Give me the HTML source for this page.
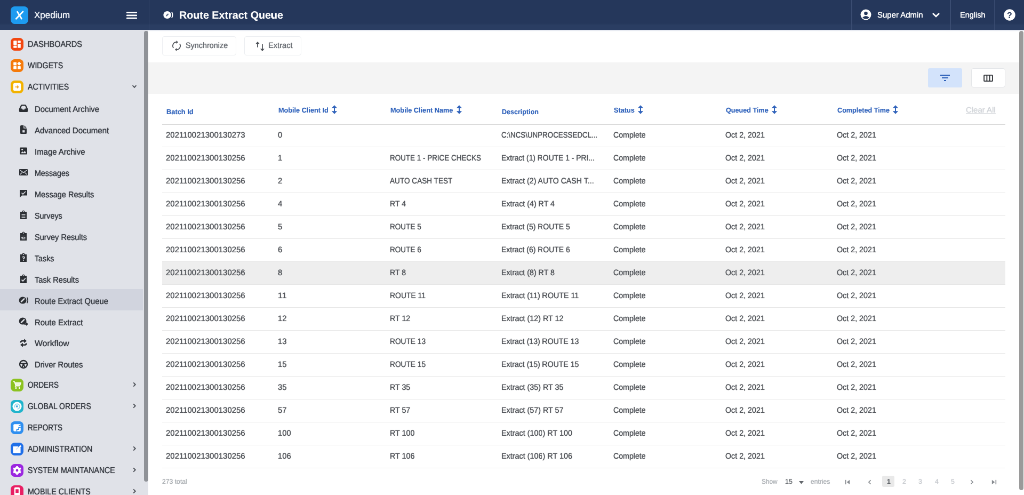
<!DOCTYPE html>
<html><head><meta charset="utf-8"><title>Route Extract Queue</title>
<style>
*{box-sizing:border-box;margin:0;padding:0}
html,body{width:1024px;height:495px;overflow:hidden;background:#fff;font-family:"Liberation Sans",sans-serif}
#app{position:absolute;left:0;top:0;width:1920px;height:929px;transform:scale(0.533333);transform-origin:0 0;overflow:hidden;background:#fff;color:#3c4043;font-size:15px}
.abs{position:absolute}
.t{position:absolute;white-space:nowrap;line-height:1;transform-origin:0 0;display:block}
#app{will-change:transform;backface-visibility:hidden;text-rendering:geometricPrecision}
.t{-webkit-text-stroke:0.12px currentColor;text-shadow:0 0 0.9px currentColor}
/* header */
#hdr{position:absolute;left:0;top:0;width:1920px;height:56px;background:linear-gradient(#25375b 0,#25375b 44px,#2a3d62 47px,#2a3d62 100%)}
#hdr .sep{position:absolute;top:0;width:1.6px;height:56px;background:#3a4c71}
#logo{position:absolute;left:20px;top:12px;width:33px;height:33px;border-radius:7.5px;background:#1d9bf0}
#hsh{position:absolute;left:278px;top:56px;width:1642px;height:3px;background:linear-gradient(#d9deea,#fff)}
/* sidebar */
#side{position:absolute;left:0;top:56px;width:278px;height:873px;background:#e0e2e8}
#side .sb{position:absolute;left:270px;top:2px;width:8px;height:845px;background:#8f9297;border-radius:4px}
.actbg{position:absolute;left:0;width:268px;height:40px;background:#d1d4de}
#side .ic{position:absolute;left:19.7px;width:24px;height:24px;border-radius:7.5px;overflow:hidden}
#side .si{position:absolute;left:35px;width:18px;height:18px}
#side .ch{position:absolute;left:246px;width:12px;height:12px}
/* main */
#main{position:absolute;left:278px;top:56px;width:1642px;height:873px;background:#fff}
.btn{position:absolute;top:68px;height:36px;border:1px solid #eceef1;border-radius:4px;background:#fff}
#band{position:absolute;left:278px;top:116.5px;width:1632px;height:59.5px;background:#f4f4f4}
#fbtn{position:absolute;left:1740px;top:128px;width:64px;height:36px;background:#d3e3fb;border-radius:3px}
#cbtn{position:absolute;left:1821px;top:128px;width:64px;height:36px;background:#fff;border:1px solid #e3e5e8;border-radius:4px}
#thline{position:absolute;left:303.5px;top:232.5px;width:1581.5px;height:1px;background:#d9d9d9}
.row{position:absolute;left:303.5px;width:1581.5px;height:43px;border-bottom:1px solid #e6e6e6}
.row.hl{background:#eeeeee}
#vsb{position:absolute;left:1910.5px;top:58px;width:8.5px;height:861px;background:#9a9a9a;border-radius:4px}
</style></head><body>
<div id="app">
<div id="main"></div><div id="hsh"></div>
<div id="side"><div class="sb"></div>
<div class="ic" style="top:15.00px;background:#f2460f"><svg width="24" height="24" viewBox="0 0 23 23" style="display:block"><rect x="5" y="5" width="6" height="7.5" rx=".8" fill="#fff"/><rect x="5" y="14" width="6" height="4" rx=".8" fill="#fff"/><rect x="12.5" y="5" width="5.5" height="4" rx=".8" fill="#fff"/><rect x="12.5" y="10.5" width="5.5" height="7.5" rx=".8" fill="#fff"/></svg></div>
<span class="t" style="left:51.80px;top:20.36px;font-size:16px;color:#393d44;transform:scaleX(0.9105);">DASHBOARDS</span>
<div class="ic" style="top:54.94px;background:#f57a0a"><svg width="24" height="24" viewBox="0 0 23 23" style="display:block"><rect x="5" y="5.5" width="5.5" height="5.5" rx=".8" fill="#fff"/><rect x="5" y="12.5" width="5.5" height="5.5" rx=".8" fill="#fff"/><rect x="12.5" y="12.5" width="5.5" height="5.5" rx=".8" fill="#fff"/><path d="M15.2 4.2 L18.8 7.8 L15.2 11.4 L11.6 7.8Z" fill="#fff"/></svg></div>
<span class="t" style="left:51.80px;top:60.30px;font-size:16px;color:#393d44;transform:scaleX(0.8870);">WIDGETS</span>
<div class="ic" style="top:94.88px;background:#f2b200"><svg width="24" height="24" viewBox="0 0 23 23" style="display:block"><rect x="4.5" y="4.5" width="14" height="14" rx="3" fill="#fff"/><path d="M8 11.5 H13 M11.5 9.3 L13.8 11.5 L11.5 13.7" stroke="#f5a623" stroke-width="1.6" fill="none"/></svg></div>
<span class="t" style="left:51.80px;top:100.24px;font-size:16px;color:#393d44;transform:scaleX(0.8870);">ACTIVITIES</span>
<svg class="ch" style="top:100.28px" viewBox="0 0 12 12"><path d="M2.6 4.2 L6 7.8 L9.4 4.2" fill="none" stroke="#4c5057" stroke-width="1.9"/></svg>
<div class="si" style="top:138.22px"><svg width="18" height="18" viewBox="0 0 18 18" style="display:block"><path d="M0.8 10 L4 3.4 Q4.6 2.2 6 2.2 H12 Q13.4 2.2 14 3.4 L17.2 10 V14.6 Q17.2 16 15.8 16 H2.2 Q0.8 16 0.8 14.6 Z" fill="#2b2e33"/><path d="M3.6 9.4 L6 4.6 H12 L14.4 9.4 H11.6 L10.6 11.4 H7.4 L6.4 9.4 Z" fill="#e0e2e8"/></svg></div>
<span class="t" style="left:65.20px;top:142.13px;font-size:15.7px;color:#393d44;transform:scaleX(0.9507);">Document Archive</span>
<div class="si" style="top:178.16px"><svg width="18" height="18" viewBox="0 0 18 18" style="display:block"><path d="M4.5 1 H9.2 V6.8 H15 V15.5 Q15 17 13.5 17 H4.5 Q3 17 3 15.5 V2.5 Q3 1 4.5 1Z" fill="#2b2e33"/><path d="M10.6 1.2 L14.8 5.4 H10.6Z" fill="#2b2e33"/><rect x="7.2" y="10.2" width="4.2" height="4.2" fill="#e0e2e8"/></svg></div>
<span class="t" style="left:65.20px;top:182.07px;font-size:15.7px;color:#393d44;transform:scaleX(0.9559);">Advanced Document</span>
<div class="si" style="top:218.10px"><svg width="18" height="18" viewBox="0 0 18 18" style="display:block"><rect x="2" y="2.5" width="14" height="13" rx="1.5" fill="#2b2e33"/><path d="M4 13.3 L7 9.8 L9 12 L11.5 8.8 L14.2 13.3Z" fill="#e0e2e8"/><circle cx="6.6" cy="6.2" r="1.5" fill="#e0e2e8"/></svg></div>
<span class="t" style="left:65.20px;top:222.01px;font-size:15.7px;color:#393d44;transform:scaleX(0.9518);">Image Archive</span>
<div class="si" style="top:258.04px"><svg width="18" height="18" viewBox="0 0 18 18" style="display:block"><rect x="1" y="3" width="16" height="12" rx="1.2" fill="#2b2e33"/><path d="M2.5 5 L9 9.5 L15.5 5 M2.5 13.2 L6.8 9.3 M15.5 13.2 L11.2 9.3" stroke="#e0e2e8" stroke-width="1.3" fill="none"/></svg></div>
<span class="t" style="left:65.20px;top:261.95px;font-size:15.7px;color:#393d44;transform:scaleX(0.9080);">Messages</span>
<div class="si" style="top:297.98px"><svg width="18" height="18" viewBox="0 0 18 18" style="display:block"><path d="M2 2 H16 V12.5 H6 L2 16.5Z" fill="#2b2e33"/><path d="M5.5 7.5 L8 10 L13 5" stroke="#e0e2e8" stroke-width="1.6" fill="none"/></svg></div>
<span class="t" style="left:65.20px;top:301.89px;font-size:15.7px;color:#393d44;transform:scaleX(0.9249);">Message Results</span>
<div class="si" style="top:337.92px"><svg width="18" height="18" viewBox="0 0 18 18" style="display:block"><path d="M3 3 H6.5 A2.5 2.5 0 0 1 11.5 3 H15 V17 H3Z" fill="#2b2e33"/><circle cx="9" cy="3" r="1" fill="#e0e2e8"/><path d="M5.5 8.5 H12.5 M5.5 11 H12.5 M5.5 13.5 H12.5" stroke="#e0e2e8" stroke-width="1.2"/></svg></div>
<span class="t" style="left:65.20px;top:341.83px;font-size:15.7px;color:#393d44;transform:scaleX(0.9125);">Surveys</span>
<div class="si" style="top:377.86px"><svg width="18" height="18" viewBox="0 0 18 18" style="display:block"><path d="M3 3 H6.5 A2.5 2.5 0 0 1 11.5 3 H15 V17 H3Z" fill="#2b2e33"/><circle cx="9" cy="3" r="1" fill="#e0e2e8"/><path d="M5.5 8.5 H12.5 M9.5 11.2 H12.5 M5.5 13.8 H12.5 M5.3 11 L6.6 12.3 L8.6 10" stroke="#e0e2e8" stroke-width="1.2" fill="none"/></svg></div>
<span class="t" style="left:65.20px;top:381.77px;font-size:15.7px;color:#393d44;transform:scaleX(0.9288);">Survey Results</span>
<div class="si" style="top:417.80px"><svg width="18" height="18" viewBox="0 0 18 18" style="display:block"><path d="M3 3 H6.5 A2.5 2.5 0 0 1 11.5 3 H15 V17 H3Z" fill="#2b2e33"/><circle cx="9" cy="3" r="1" fill="#e0e2e8"/><path d="M7 8.3 Q9 6.5 11 8.3 Q11.3 9.8 9 11 V12.2 M9 13.5 V15" stroke="#e0e2e8" stroke-width="1.6" fill="none"/></svg></div>
<span class="t" style="left:65.20px;top:421.71px;font-size:15.7px;color:#393d44;transform:scaleX(0.9064);">Tasks</span>
<div class="si" style="top:457.74px"><svg width="18" height="18" viewBox="0 0 18 18" style="display:block"><path d="M3 3 H6.5 A2.5 2.5 0 0 1 11.5 3 H15 V17 H3Z" fill="#2b2e33"/><circle cx="9" cy="3" r="1" fill="#e0e2e8"/><path d="M5.5 10.5 L8 13 L12.8 7.5" stroke="#e0e2e8" stroke-width="1.8" fill="none"/></svg></div>
<span class="t" style="left:65.20px;top:461.65px;font-size:15.7px;color:#393d44;transform:scaleX(0.9333);">Task Results</span>
<div class="actbg" style="top:486.48px"></div>
<div class="si" style="top:497.68px"><svg width="18" height="18" viewBox="0 0 18 18" style="display:block"><ellipse cx="7.6" cy="9" rx="7" ry="6.6" fill="#2b2e33"/><path d="M5 11.6 L10.2 6.4" stroke="#e0e2e8" stroke-width="2.6" stroke-linecap="round"/><path d="M15.6 3.6 Q18.8 9 15.6 14.4" stroke="#2b2e33" stroke-width="1.7" fill="none"/></svg></div>
<span class="t" style="left:65.20px;top:501.59px;font-size:15.7px;color:#393d44;transform:scaleX(0.9413);">Route Extract Queue</span>
<div class="si" style="top:537.62px"><svg width="18" height="18" viewBox="0 0 18 18" style="display:block"><ellipse cx="7.6" cy="8" rx="7" ry="6.6" fill="#2b2e33"/><path d="M5 10.6 L10.2 5.4" stroke="#e0e2e8" stroke-width="2.6" stroke-linecap="round"/><path d="M10.5 13.6 H15" stroke="#2b2e33" stroke-width="2.4" fill="none"/><path d="M14 10.2 L18 13.6 L14 17Z" fill="#2b2e33"/></svg></div>
<span class="t" style="left:65.20px;top:541.53px;font-size:15.7px;color:#393d44;transform:scaleX(0.9502);">Route Extract</span>
<div class="si" style="top:577.56px"><svg width="18" height="18" viewBox="0 0 18 18" style="display:block"><path d="M10.5 5.2 H6.5 Q3.8 5.2 3.8 8.6" stroke="#2b2e33" stroke-width="2.5" fill="none"/><path d="M10 1.2 L15 5.2 L10 9.2Z" fill="#2b2e33"/><path d="M7.5 12.8 H11.5 Q14.2 12.8 14.2 9.4" stroke="#2b2e33" stroke-width="2.5" fill="none"/><path d="M8 8.8 L3 12.8 L8 16.8Z" fill="#2b2e33"/></svg></div>
<span class="t" style="left:65.20px;top:581.47px;font-size:15.7px;color:#393d44;transform:scaleX(1.0066);">Workflow</span>
<div class="si" style="top:617.50px"><svg width="18" height="18" viewBox="0 0 18 18" style="display:block"><circle cx="9" cy="9" r="7" fill="none" stroke="#2b2e33" stroke-width="2.3"/><path d="M2.5 7.6 H15.5 M9 9 L6 15 M9 9 L12 15" stroke="#2b2e33" stroke-width="2.3" fill="none"/><circle cx="9" cy="9" r="2" fill="#2b2e33"/></svg></div>
<span class="t" style="left:65.20px;top:621.41px;font-size:15.7px;color:#393d44;transform:scaleX(0.9417);">Driver Routes</span>
<div class="ic" style="top:654.04px;background:#8cc220"><svg width="24" height="24" viewBox="0 0 23 23" style="display:block"><path d="M4.5 5.3 H6.8 L7.6 7.3 H18.5 L16.5 12.6 H9 L6.8 5.8" fill="#eef7d8" stroke="#fff" stroke-width="1.3" stroke-linejoin="round"/><circle cx="9.5" cy="16.8" r="1.5" fill="#fff"/><circle cx="15.6" cy="16.8" r="1.5" fill="#fff"/><path d="M8.8 12.8 L8 14.8 H16.8" stroke="#fff" stroke-width="1.2" fill="none"/></svg></div>
<span class="t" style="left:51.80px;top:659.40px;font-size:16px;color:#393d44;transform:scaleX(0.8464);">ORDERS</span>
<svg class="ch" style="top:659.44px" viewBox="0 0 12 12"><path d="M4.2 2.4 L7.8 6 L4.2 9.6" fill="none" stroke="#4c5057" stroke-width="1.9"/></svg>
<div class="ic" style="top:693.98px;background:#21b4cc"><svg width="24" height="24" viewBox="0 0 23 23" style="display:block"><circle cx="11.5" cy="11.5" r="8.2" fill="#fff"/><path d="M7.5 13.5 A4.6 4.6 0 1 1 12 16.3" stroke="#8fdbe8" stroke-width="1.5" fill="none"/><circle cx="11.3" cy="11.6" r="1.9" fill="#4aa8e0"/></svg></div>
<span class="t" style="left:51.80px;top:699.34px;font-size:16px;color:#393d44;transform:scaleX(0.8705);">GLOBAL ORDERS</span>
<svg class="ch" style="top:699.38px" viewBox="0 0 12 12"><path d="M4.2 2.4 L7.8 6 L4.2 9.6" fill="none" stroke="#4c5057" stroke-width="1.9"/></svg>
<div class="ic" style="top:733.92px;background:#2f8ff0"><svg width="24" height="24" viewBox="0 0 23 23" style="display:block"><rect x="5" y="5" width="13" height="13" rx="2" fill="#fff"/><path d="M14.5 7.5 H18 M11 18 V14.5 H14.5 V11 H18" stroke="#2f8ff0" stroke-width="1.6" fill="none"/></svg></div>
<span class="t" style="left:51.80px;top:739.28px;font-size:16px;color:#393d44;transform:scaleX(0.8419);">REPORTS</span>
<div class="ic" style="top:773.86px;background:#1f6fe8"><svg width="24" height="24" viewBox="0 0 23 23" style="display:block"><path d="M5 7.5 H13 L9.5 11 V14 H12.5 L17 9.5 V18 H5Z" fill="#fff" stroke="#fff" stroke-width="1.6" stroke-linejoin="round"/><path d="M17.5 4.5 L19.5 6.5 L12.5 13.5 L10.3 13.8 L10.6 11.5Z" fill="#fff"/></svg></div>
<span class="t" style="left:51.80px;top:779.22px;font-size:16px;color:#393d44;transform:scaleX(0.8948);">ADMINISTRATION</span>
<svg class="ch" style="top:779.26px" viewBox="0 0 12 12"><path d="M4.2 2.4 L7.8 6 L4.2 9.6" fill="none" stroke="#4c5057" stroke-width="1.9"/></svg>
<div class="ic" style="top:813.80px;background:#9b27e0"><svg width="24" height="24" viewBox="0 0 23 23" style="display:block"><circle cx="11.5" cy="11.5" r="4.6" fill="none" stroke="#fff" stroke-width="3.4"/><g stroke="#fff" stroke-width="3.2"><path d="M11.5 3.8 V19.2"/><path d="M4.8 7.65 L18.2 15.35"/><path d="M4.8 15.35 L18.2 7.65"/></g><circle cx="11.5" cy="11.5" r="2.3" fill="#9c27d8"/></svg></div>
<span class="t" style="left:51.80px;top:819.16px;font-size:16px;color:#393d44;transform:scaleX(0.8824);">SYSTEM MAINTANANCE</span>
<svg class="ch" style="top:819.20px" viewBox="0 0 12 12"><path d="M4.2 2.4 L7.8 6 L4.2 9.6" fill="none" stroke="#4c5057" stroke-width="1.9"/></svg>
<div class="ic" style="top:853.74px;background:#e91e63"><svg width="24" height="24" viewBox="0 0 23 23" style="display:block"><rect x="6.5" y="3.5" width="10" height="17" rx="2" fill="#fff"/><rect x="8.8" y="7" width="5.4" height="6.5" fill="#e91e63"/></svg></div>
<span class="t" style="left:51.80px;top:859.10px;font-size:16px;color:#393d44;transform:scaleX(0.8892);">MOBILE CLIENTS</span>
<svg class="ch" style="top:859.14px" viewBox="0 0 12 12"><path d="M4.2 2.4 L7.8 6 L4.2 9.6" fill="none" stroke="#4c5057" stroke-width="1.9"/></svg>
</div>
<div id="hdr">
<div id="logo"><svg width="33" height="33" viewBox="0 0 33 33"><path d="M12.6 10.2 L20.4 23 M23 9.8 L10.2 23.2" stroke="#fff" stroke-width="2.8" fill="none" stroke-linecap="round"/></svg></div>
<span class="t" style="left:63.50px;top:19.79px;font-size:17.5px;color:#f0f3f8;transform:scaleX(0.9719);">Xpedium</span>
<svg class="abs" style="left:237px;top:22px" width="20" height="14" viewBox="0 0 20 14"><rect x="0" y="0" width="20" height="2.8" rx="1" fill="#fff"/><rect x="0" y="5.4" width="20" height="2.8" rx="1" fill="#fff"/><rect x="0" y="10.8" width="20" height="2.8" rx="1" fill="#fff"/></svg>
<div class="sep" style="left:278.5px"></div>
<div class="abs" style="left:306px;top:20px;width:20px;height:16px"><svg width="20" height="16" viewBox="0 0 20 16"><ellipse cx="7.6" cy="8" rx="7.3" ry="7" fill="#fff"/><path d="M6.2 9.4 L9 6.6" stroke="#5a6886" stroke-width="2.2" stroke-linecap="round"/><path d="M16 2.4 Q19.2 8 16 13.6" stroke="#fff" stroke-width="1.9" fill="none"/></svg></div>
<span class="t" style="left:336.00px;top:19.07px;font-size:20px;color:#fff;transform:scaleX(0.9857);font-weight:bold;-webkit-text-stroke:0.15px currentColor;text-shadow:none;">Route Extract Queue</span>
<div class="sep" style="left:1596px"></div>
<div class="abs" style="left:1612.5px;top:17px;width:21px;height:21px"><svg width="21" height="21" viewBox="0 0 21 21"><circle cx="10.5" cy="10.5" r="10" fill="#fff"/><circle cx="10.5" cy="8" r="3.3" fill="#24375b"/><path d="M4 16 Q10.5 10 17 16 Q10.5 21.5 4 16Z" fill="#24375b"/></svg></div>
<span class="t" style="left:1644.50px;top:20.90px;font-size:15px;color:#fff;transform:scaleX(0.9977);text-shadow:0 0 .7px #fff;">Super Admin</span>
<svg class="abs" style="left:1747px;top:22.5px" width="16" height="11" viewBox="0 0 16 11"><path d="M2 2 L8 7.8 L14 2" fill="none" stroke="#fff" stroke-width="2.7"/></svg>
<div class="sep" style="left:1781px"></div>
<span class="t" style="left:1800.00px;top:20.80px;font-size:15px;color:#fff;transform:scaleX(0.9642);text-shadow:0 0 .7px #fff;">English</span>
<div class="sep" style="left:1863.5px"></div>
<div class="abs" style="left:1881.5px;top:17px;width:22px;height:22px"><svg width="22" height="22" viewBox="0 0 22 22"><circle cx="11" cy="11" r="10.7" fill="#fff"/><text x="11" y="16.6" font-family="Liberation Sans" font-weight="bold" font-size="16" text-anchor="middle" fill="#24375b">?</text></svg></div>
</div>
<div class="btn" style="left:304px;width:139px"><svg class="abs" style="left:15px;top:6px" width="22" height="22" viewBox="0 0 20 20"><path d="M10 3.6 A6.4 6.4 0 0 0 4.7 13.6" fill="none" stroke="#4c5056" stroke-width="1.6"/><path d="M10 16.4 A6.4 6.4 0 0 0 15.3 6.4" fill="none" stroke="#4c5056" stroke-width="1.6"/><path d="M9.6 0.8 L12.8 3.6 L9.6 6.4Z" fill="#4c5056"/><path d="M10.4 13.6 L7.2 16.4 L10.4 19.2Z" fill="#4c5056"/></svg></div>
<span class="t" style="left:348.00px;top:78.30px;font-size:15px;color:#6a6e74;transform:scaleX(0.9586);">Synchronize</span>
<div class="btn" style="left:458px;width:107px"><svg class="abs" style="left:19px;top:8px" width="20" height="20" viewBox="0 0 18 18"><path d="M4.5 0.8 L1 5 H3.7 V10.5 H5.3 V5 H8Z" fill="#4c5056"/><path d="M12.5 17.2 L9 13 H11.7 V5.5 H13.3 V13 H16Z" fill="#4c5056"/></svg></div>
<span class="t" style="left:503.00px;top:78.30px;font-size:15px;color:#6a6e74;transform:scaleX(0.9761);">Extract</span>
<div id="band"></div>
<div id="fbtn"><svg class="abs" style="left:23px;top:11px" width="18" height="14" viewBox="0 0 18 14"><rect x="0" y="1" width="18" height="2" fill="#2b5fb8"/><rect x="3" y="6" width="12" height="2" fill="#2b5fb8"/><rect x="7" y="11" width="4" height="2" fill="#2b5fb8"/></svg></div>
<div id="cbtn"><svg class="abs" style="left:21.5px;top:11px" width="18" height="13" viewBox="0 0 19 14"><rect x="1" y="1" width="17" height="12" rx="1" fill="none" stroke="#2e3136" stroke-width="2"/><path d="M6.7 1 V13 M12.3 1 V13" stroke="#2e3136" stroke-width="2"/></svg></div>
<span class="t" style="left:311.50px;top:202.50px;font-size:13px;color:#2f62bb;transform:scaleX(0.9872);font-weight:bold;-webkit-text-stroke:0.15px currentColor;text-shadow:none;">Batch Id</span>
<span class="t" style="left:521.50px;top:199.50px;font-size:13px;color:#2f62bb;transform:scaleX(0.9760);font-weight:bold;-webkit-text-stroke:0.15px currentColor;text-shadow:none;">Mobile Client Id</span>
<svg class="abs" style="left:621.0px;top:197px" width="12" height="17" viewBox="0 0 12 17"><path d="M6 0.3 L0.8 5.8 H5 V11.2 H0.8 L6 16.7 L11.2 11.2 H7 V5.8 H11.2 Z" fill="#2f62bb"/></svg>
<span class="t" style="left:731.50px;top:199.50px;font-size:13px;color:#2f62bb;transform:scaleX(0.9789);font-weight:bold;-webkit-text-stroke:0.15px currentColor;text-shadow:none;">Mobile Client Name</span>
<svg class="abs" style="left:854.6px;top:197px" width="12" height="17" viewBox="0 0 12 17"><path d="M6 0.3 L0.8 5.8 H5 V11.2 H0.8 L6 16.7 L11.2 11.2 H7 V5.8 H11.2 Z" fill="#2f62bb"/></svg>
<span class="t" style="left:940.50px;top:202.50px;font-size:13px;color:#2f62bb;transform:scaleX(0.9649);font-weight:bold;-webkit-text-stroke:0.15px currentColor;text-shadow:none;">Description</span>
<span class="t" style="left:1150.50px;top:199.50px;font-size:13px;color:#2f62bb;transform:scaleX(0.9769);font-weight:bold;-webkit-text-stroke:0.15px currentColor;text-shadow:none;">Status</span>
<svg class="abs" style="left:1195.0px;top:197px" width="12" height="17" viewBox="0 0 12 17"><path d="M6 0.3 L0.8 5.8 H5 V11.2 H0.8 L6 16.7 L11.2 11.2 H7 V5.8 H11.2 Z" fill="#2f62bb"/></svg>
<span class="t" style="left:1360.50px;top:199.50px;font-size:13px;color:#2f62bb;transform:scaleX(0.9705);font-weight:bold;-webkit-text-stroke:0.15px currentColor;text-shadow:none;">Queued Time</span>
<svg class="abs" style="left:1445.9px;top:197px" width="12" height="17" viewBox="0 0 12 17"><path d="M6 0.3 L0.8 5.8 H5 V11.2 H0.8 L6 16.7 L11.2 11.2 H7 V5.8 H11.2 Z" fill="#2f62bb"/></svg>
<span class="t" style="left:1569.50px;top:199.50px;font-size:13px;color:#2f62bb;transform:scaleX(0.9720);font-weight:bold;-webkit-text-stroke:0.15px currentColor;text-shadow:none;">Completed Time</span>
<svg class="abs" style="left:1673.3px;top:197px" width="12" height="17" viewBox="0 0 12 17"><path d="M6 0.3 L0.8 5.8 H5 V11.2 H0.8 L6 16.7 L11.2 11.2 H7 V5.8 H11.2 Z" fill="#2f62bb"/></svg>
<span class="t" style="left:1811.00px;top:200.23px;font-size:14.5px;color:#d3d6da;transform:scaleX(1.0314);text-decoration:underline;">Clear All</span>
<div id="thline"></div>
<div class="row" style="top:233px"></div>
<span class="t" style="left:311.00px;top:246.27px;font-size:15px;color:#53565b;transform:scaleX(0.9976);">202110021300130273</span>
<span class="t" style="left:521.00px;top:246.27px;font-size:15px;color:#53565b;transform:scaleX(0.9890);">0</span>
<span class="t" style="left:940.00px;top:246.27px;font-size:15px;color:#53565b;transform:scaleX(0.8897);">C:\NCS\UNPROCESSEDCL...</span>
<span class="t" style="left:1150.00px;top:246.27px;font-size:15px;color:#53565b;transform:scaleX(0.9434);">Complete</span>
<span class="t" style="left:1360.00px;top:246.27px;font-size:15px;color:#53565b;transform:scaleX(0.9526);">Oct 2, 2021</span>
<span class="t" style="left:1569.00px;top:246.27px;font-size:15px;color:#53565b;transform:scaleX(0.9526);">Oct 2, 2021</span>
<div class="row" style="top:276px"></div>
<span class="t" style="left:311.00px;top:289.27px;font-size:15px;color:#53565b;transform:scaleX(0.9976);">202110021300130256</span>
<span class="t" style="left:521.00px;top:289.27px;font-size:15px;color:#53565b;transform:scaleX(0.9890);">1</span>
<span class="t" style="left:731.00px;top:289.27px;font-size:15px;color:#53565b;transform:scaleX(0.8959);">ROUTE 1 - PRICE CHECKS</span>
<span class="t" style="left:940.00px;top:289.27px;font-size:15px;color:#53565b;transform:scaleX(0.9247);">Extract (1) ROUTE 1 - PRI...</span>
<span class="t" style="left:1150.00px;top:289.27px;font-size:15px;color:#53565b;transform:scaleX(0.9434);">Complete</span>
<span class="t" style="left:1360.00px;top:289.27px;font-size:15px;color:#53565b;transform:scaleX(0.9526);">Oct 2, 2021</span>
<span class="t" style="left:1569.00px;top:289.27px;font-size:15px;color:#53565b;transform:scaleX(0.9526);">Oct 2, 2021</span>
<div class="row" style="top:319px"></div>
<span class="t" style="left:311.00px;top:332.27px;font-size:15px;color:#53565b;transform:scaleX(0.9976);">202110021300130256</span>
<span class="t" style="left:521.00px;top:332.27px;font-size:15px;color:#53565b;transform:scaleX(0.9890);">2</span>
<span class="t" style="left:731.00px;top:332.27px;font-size:15px;color:#53565b;transform:scaleX(0.9066);">AUTO CASH TEST</span>
<span class="t" style="left:940.00px;top:332.27px;font-size:15px;color:#53565b;transform:scaleX(0.9454);">Extract (2) AUTO CASH T...</span>
<span class="t" style="left:1150.00px;top:332.27px;font-size:15px;color:#53565b;transform:scaleX(0.9434);">Complete</span>
<span class="t" style="left:1360.00px;top:332.27px;font-size:15px;color:#53565b;transform:scaleX(0.9526);">Oct 2, 2021</span>
<span class="t" style="left:1569.00px;top:332.27px;font-size:15px;color:#53565b;transform:scaleX(0.9526);">Oct 2, 2021</span>
<div class="row" style="top:362px"></div>
<span class="t" style="left:311.00px;top:375.27px;font-size:15px;color:#53565b;transform:scaleX(0.9976);">202110021300130256</span>
<span class="t" style="left:521.00px;top:375.27px;font-size:15px;color:#53565b;transform:scaleX(0.9890);">4</span>
<span class="t" style="left:731.00px;top:375.27px;font-size:15px;color:#53565b;transform:scaleX(0.9371);">RT 4</span>
<span class="t" style="left:940.00px;top:375.27px;font-size:15px;color:#53565b;transform:scaleX(0.9491);">Extract (4) RT 4</span>
<span class="t" style="left:1150.00px;top:375.27px;font-size:15px;color:#53565b;transform:scaleX(0.9434);">Complete</span>
<span class="t" style="left:1360.00px;top:375.27px;font-size:15px;color:#53565b;transform:scaleX(0.9526);">Oct 2, 2021</span>
<span class="t" style="left:1569.00px;top:375.27px;font-size:15px;color:#53565b;transform:scaleX(0.9526);">Oct 2, 2021</span>
<div class="row" style="top:405px"></div>
<span class="t" style="left:311.00px;top:418.27px;font-size:15px;color:#53565b;transform:scaleX(0.9976);">202110021300130256</span>
<span class="t" style="left:521.00px;top:418.27px;font-size:15px;color:#53565b;transform:scaleX(0.9890);">5</span>
<span class="t" style="left:731.00px;top:418.27px;font-size:15px;color:#53565b;transform:scaleX(0.9043);">ROUTE 5</span>
<span class="t" style="left:940.00px;top:418.27px;font-size:15px;color:#53565b;transform:scaleX(0.9308);">Extract (5) ROUTE 5</span>
<span class="t" style="left:1150.00px;top:418.27px;font-size:15px;color:#53565b;transform:scaleX(0.9434);">Complete</span>
<span class="t" style="left:1360.00px;top:418.27px;font-size:15px;color:#53565b;transform:scaleX(0.9526);">Oct 2, 2021</span>
<span class="t" style="left:1569.00px;top:418.27px;font-size:15px;color:#53565b;transform:scaleX(0.9526);">Oct 2, 2021</span>
<div class="row" style="top:448px"></div>
<span class="t" style="left:311.00px;top:461.27px;font-size:15px;color:#53565b;transform:scaleX(0.9976);">202110021300130256</span>
<span class="t" style="left:521.00px;top:461.27px;font-size:15px;color:#53565b;transform:scaleX(0.9890);">6</span>
<span class="t" style="left:731.00px;top:461.27px;font-size:15px;color:#53565b;transform:scaleX(0.9043);">ROUTE 6</span>
<span class="t" style="left:940.00px;top:461.27px;font-size:15px;color:#53565b;transform:scaleX(0.9308);">Extract (6) ROUTE 6</span>
<span class="t" style="left:1150.00px;top:461.27px;font-size:15px;color:#53565b;transform:scaleX(0.9434);">Complete</span>
<span class="t" style="left:1360.00px;top:461.27px;font-size:15px;color:#53565b;transform:scaleX(0.9526);">Oct 2, 2021</span>
<span class="t" style="left:1569.00px;top:461.27px;font-size:15px;color:#53565b;transform:scaleX(0.9526);">Oct 2, 2021</span>
<div class="row hl" style="top:491px"></div>
<span class="t" style="left:311.00px;top:504.27px;font-size:15px;color:#53565b;transform:scaleX(0.9976);">202110021300130256</span>
<span class="t" style="left:521.00px;top:504.27px;font-size:15px;color:#53565b;transform:scaleX(0.9890);">8</span>
<span class="t" style="left:731.00px;top:504.27px;font-size:15px;color:#53565b;transform:scaleX(0.9371);">RT 8</span>
<span class="t" style="left:940.00px;top:504.27px;font-size:15px;color:#53565b;transform:scaleX(0.9491);">Extract (8) RT 8</span>
<span class="t" style="left:1150.00px;top:504.27px;font-size:15px;color:#53565b;transform:scaleX(0.9434);">Complete</span>
<span class="t" style="left:1360.00px;top:504.27px;font-size:15px;color:#53565b;transform:scaleX(0.9526);">Oct 2, 2021</span>
<span class="t" style="left:1569.00px;top:504.27px;font-size:15px;color:#53565b;transform:scaleX(0.9526);">Oct 2, 2021</span>
<div class="row" style="top:534px"></div>
<span class="t" style="left:311.00px;top:547.27px;font-size:15px;color:#53565b;transform:scaleX(0.9976);">202110021300130256</span>
<span class="t" style="left:521.00px;top:547.27px;font-size:15px;color:#53565b;transform:scaleX(1.0597);">11</span>
<span class="t" style="left:731.00px;top:547.27px;font-size:15px;color:#53565b;transform:scaleX(0.9280);">ROUTE 11</span>
<span class="t" style="left:940.00px;top:547.27px;font-size:15px;color:#53565b;transform:scaleX(0.9507);">Extract (11) ROUTE 11</span>
<span class="t" style="left:1150.00px;top:547.27px;font-size:15px;color:#53565b;transform:scaleX(0.9434);">Complete</span>
<span class="t" style="left:1360.00px;top:547.27px;font-size:15px;color:#53565b;transform:scaleX(0.9526);">Oct 2, 2021</span>
<span class="t" style="left:1569.00px;top:547.27px;font-size:15px;color:#53565b;transform:scaleX(0.9526);">Oct 2, 2021</span>
<div class="row" style="top:577px"></div>
<span class="t" style="left:311.00px;top:590.27px;font-size:15px;color:#53565b;transform:scaleX(0.9976);">202110021300130256</span>
<span class="t" style="left:521.00px;top:590.27px;font-size:15px;color:#53565b;transform:scaleX(0.9890);">12</span>
<span class="t" style="left:731.00px;top:590.27px;font-size:15px;color:#53565b;transform:scaleX(0.9479);">RT 12</span>
<span class="t" style="left:940.00px;top:590.27px;font-size:15px;color:#53565b;transform:scaleX(0.9546);">Extract (12) RT 12</span>
<span class="t" style="left:1150.00px;top:590.27px;font-size:15px;color:#53565b;transform:scaleX(0.9434);">Complete</span>
<span class="t" style="left:1360.00px;top:590.27px;font-size:15px;color:#53565b;transform:scaleX(0.9526);">Oct 2, 2021</span>
<span class="t" style="left:1569.00px;top:590.27px;font-size:15px;color:#53565b;transform:scaleX(0.9526);">Oct 2, 2021</span>
<div class="row" style="top:620px"></div>
<span class="t" style="left:311.00px;top:633.27px;font-size:15px;color:#53565b;transform:scaleX(0.9976);">202110021300130256</span>
<span class="t" style="left:521.00px;top:633.27px;font-size:15px;color:#53565b;transform:scaleX(0.9890);">13</span>
<span class="t" style="left:731.00px;top:633.27px;font-size:15px;color:#53565b;transform:scaleX(0.9139);">ROUTE 13</span>
<span class="t" style="left:940.00px;top:633.27px;font-size:15px;color:#53565b;transform:scaleX(0.9371);">Extract (13) ROUTE 13</span>
<span class="t" style="left:1150.00px;top:633.27px;font-size:15px;color:#53565b;transform:scaleX(0.9434);">Complete</span>
<span class="t" style="left:1360.00px;top:633.27px;font-size:15px;color:#53565b;transform:scaleX(0.9526);">Oct 2, 2021</span>
<span class="t" style="left:1569.00px;top:633.27px;font-size:15px;color:#53565b;transform:scaleX(0.9526);">Oct 2, 2021</span>
<div class="row" style="top:663px"></div>
<span class="t" style="left:311.00px;top:676.27px;font-size:15px;color:#53565b;transform:scaleX(0.9976);">202110021300130256</span>
<span class="t" style="left:521.00px;top:676.27px;font-size:15px;color:#53565b;transform:scaleX(0.9890);">15</span>
<span class="t" style="left:731.00px;top:676.27px;font-size:15px;color:#53565b;transform:scaleX(0.9139);">ROUTE 15</span>
<span class="t" style="left:940.00px;top:676.27px;font-size:15px;color:#53565b;transform:scaleX(0.9371);">Extract (15) ROUTE 15</span>
<span class="t" style="left:1150.00px;top:676.27px;font-size:15px;color:#53565b;transform:scaleX(0.9434);">Complete</span>
<span class="t" style="left:1360.00px;top:676.27px;font-size:15px;color:#53565b;transform:scaleX(0.9526);">Oct 2, 2021</span>
<span class="t" style="left:1569.00px;top:676.27px;font-size:15px;color:#53565b;transform:scaleX(0.9526);">Oct 2, 2021</span>
<div class="row" style="top:706px"></div>
<span class="t" style="left:311.00px;top:719.27px;font-size:15px;color:#53565b;transform:scaleX(0.9976);">202110021300130256</span>
<span class="t" style="left:521.00px;top:719.27px;font-size:15px;color:#53565b;transform:scaleX(0.9890);">35</span>
<span class="t" style="left:731.00px;top:719.27px;font-size:15px;color:#53565b;transform:scaleX(0.9479);">RT 35</span>
<span class="t" style="left:940.00px;top:719.27px;font-size:15px;color:#53565b;transform:scaleX(0.9546);">Extract (35) RT 35</span>
<span class="t" style="left:1150.00px;top:719.27px;font-size:15px;color:#53565b;transform:scaleX(0.9434);">Complete</span>
<span class="t" style="left:1360.00px;top:719.27px;font-size:15px;color:#53565b;transform:scaleX(0.9526);">Oct 2, 2021</span>
<span class="t" style="left:1569.00px;top:719.27px;font-size:15px;color:#53565b;transform:scaleX(0.9526);">Oct 2, 2021</span>
<div class="row" style="top:749px"></div>
<span class="t" style="left:311.00px;top:762.27px;font-size:15px;color:#53565b;transform:scaleX(0.9976);">202110021300130256</span>
<span class="t" style="left:521.00px;top:762.27px;font-size:15px;color:#53565b;transform:scaleX(0.9890);">57</span>
<span class="t" style="left:731.00px;top:762.27px;font-size:15px;color:#53565b;transform:scaleX(0.9479);">RT 57</span>
<span class="t" style="left:940.00px;top:762.27px;font-size:15px;color:#53565b;transform:scaleX(0.9546);">Extract (57) RT 57</span>
<span class="t" style="left:1150.00px;top:762.27px;font-size:15px;color:#53565b;transform:scaleX(0.9434);">Complete</span>
<span class="t" style="left:1360.00px;top:762.27px;font-size:15px;color:#53565b;transform:scaleX(0.9526);">Oct 2, 2021</span>
<span class="t" style="left:1569.00px;top:762.27px;font-size:15px;color:#53565b;transform:scaleX(0.9526);">Oct 2, 2021</span>
<div class="row" style="top:792px"></div>
<span class="t" style="left:311.00px;top:805.27px;font-size:15px;color:#53565b;transform:scaleX(0.9976);">202110021300130256</span>
<span class="t" style="left:521.00px;top:805.27px;font-size:15px;color:#53565b;transform:scaleX(0.9890);">100</span>
<span class="t" style="left:731.00px;top:805.27px;font-size:15px;color:#53565b;transform:scaleX(0.9549);">RT 100</span>
<span class="t" style="left:940.00px;top:805.27px;font-size:15px;color:#53565b;transform:scaleX(0.9587);">Extract (100) RT 100</span>
<span class="t" style="left:1150.00px;top:805.27px;font-size:15px;color:#53565b;transform:scaleX(0.9434);">Complete</span>
<span class="t" style="left:1360.00px;top:805.27px;font-size:15px;color:#53565b;transform:scaleX(0.9526);">Oct 2, 2021</span>
<span class="t" style="left:1569.00px;top:805.27px;font-size:15px;color:#53565b;transform:scaleX(0.9526);">Oct 2, 2021</span>
<div class="row" style="top:835px"></div>
<span class="t" style="left:311.00px;top:848.27px;font-size:15px;color:#53565b;transform:scaleX(0.9976);">202110021300130256</span>
<span class="t" style="left:521.00px;top:848.27px;font-size:15px;color:#53565b;transform:scaleX(0.9890);">106</span>
<span class="t" style="left:731.00px;top:848.27px;font-size:15px;color:#53565b;transform:scaleX(0.9549);">RT 106</span>
<span class="t" style="left:940.00px;top:848.27px;font-size:15px;color:#53565b;transform:scaleX(0.9587);">Extract (106) RT 106</span>
<span class="t" style="left:1150.00px;top:848.27px;font-size:15px;color:#53565b;transform:scaleX(0.9434);">Complete</span>
<span class="t" style="left:1360.00px;top:848.27px;font-size:15px;color:#53565b;transform:scaleX(0.9526);">Oct 2, 2021</span>
<span class="t" style="left:1569.00px;top:848.27px;font-size:15px;color:#53565b;transform:scaleX(0.9526);">Oct 2, 2021</span>
<span class="t" style="left:304.00px;top:896.92px;font-size:12.5px;color:#adb1b5;transform:scaleX(0.9750);">273 total</span>
<span class="t" style="left:1428.00px;top:896.72px;font-size:12.5px;color:#b0b4b8;transform:scaleX(0.9449);">Show</span><span class="t" style="left:1471.50px;top:896.72px;font-size:12.5px;color:#6c7075;transform:scaleX(0.9890);">15</span><svg class="abs" style="left:1498px;top:902.1px" width="9" height="6" viewBox="0 0 9 6"><path d="M0 0 H9 L4.5 5.5Z" fill="#62666b"/></svg><span class="t" style="left:1520.00px;top:896.72px;font-size:12.5px;color:#b0b4b8;transform:scaleX(0.9660);">entries</span><svg class="abs" style="left:1584px;top:898.6px" width="10" height="10" viewBox="0 0 12 12"><rect x="1" y="1" width="2" height="10" fill="#878b90"/><path d="M11 1 L4.5 6 L11 11Z" fill="#878b90"/></svg><svg class="abs" style="left:1626px;top:898.6px" width="10" height="10" viewBox="0 0 12 12"><path d="M8 1.5 L3.5 6 L8 10.5" fill="none" stroke="#878b90" stroke-width="2"/></svg><div class="abs" style="left:1654px;top:892px;width:23px;height:21px;background:#e9e9e9;border-radius:3px"></div><span class="t" style="left:1662.50px;top:896.72px;font-size:12.5px;color:#5a5e63;transform:scaleX(0.9890);font-weight:bold;-webkit-text-stroke:0.15px currentColor;text-shadow:none;">1</span><span class="t" style="left:1691.50px;top:896.72px;font-size:12.5px;color:#c9ccd0;transform:scaleX(0.9890);">2</span><span class="t" style="left:1722.00px;top:896.72px;font-size:12.5px;color:#c9ccd0;transform:scaleX(0.9890);">3</span><span class="t" style="left:1752.50px;top:896.72px;font-size:12.5px;color:#c9ccd0;transform:scaleX(0.9890);">4</span><span class="t" style="left:1783.00px;top:896.72px;font-size:12.5px;color:#c9ccd0;transform:scaleX(0.9890);">5</span><svg class="abs" style="left:1817px;top:898.6px" width="10" height="10" viewBox="0 0 12 12"><path d="M4 1.5 L8.5 6 L4 10.5" fill="none" stroke="#878b90" stroke-width="2"/></svg><svg class="abs" style="left:1859px;top:898.6px" width="10" height="10" viewBox="0 0 12 12"><rect x="9" y="1" width="2" height="10" fill="#878b90"/><path d="M1 1 L7.5 6 L1 11Z" fill="#878b90"/></svg>
<div id="vsb"></div>
</div>
</body></html>
